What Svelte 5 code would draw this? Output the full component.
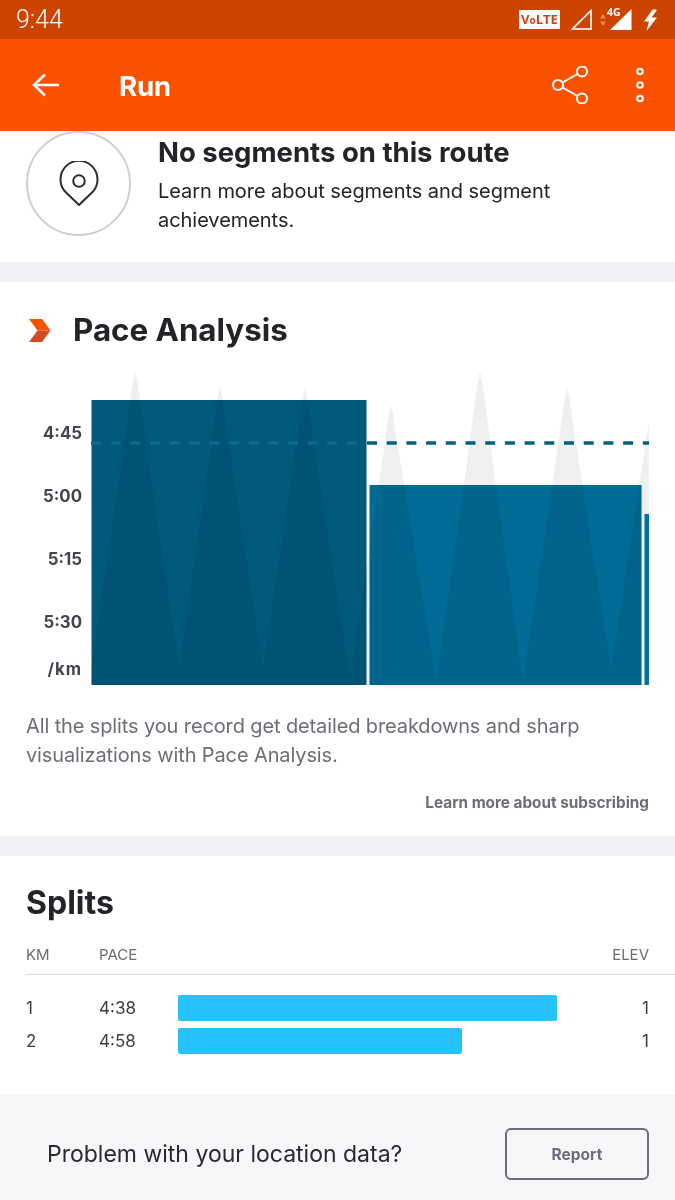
<script>
  const ticks = [
    { label: '4:45', y: 439 },
    { label: '5:00', y: 502 },
    { label: '5:15', y: 565 },
    { label: '5:30', y: 628 },
    { label: '/km', y: 675 }
  ];
  const peaks = [135, 220, 305, 391, 480, 567, 649];
  const tops = [371, 388, 387, 405, 371, 387, 424];
  const valleys = [92, 179, 263, 350, 436, 523, 611, 649];
  const valleyY = [668, 668, 668, 680, 680, 680, 668, 668];
  let mountain = 'M91 685 L91 ' + valleyY[0];
  peaks.forEach((p, i) => {
    const v0 = valleys[i];
    const v1 = valleys[i + 1];
    const t = tops[i];
    const b0 = valleyY[i];
    const b1 = valleyY[i + 1];
    mountain += ` L${p - (p - v0) * 0.36} ${t + (b0 - t) * 0.36} L${p - 5} ${t + 30} Q${p - 2} ${t + 8} ${p} ${t}`;
    if (p < 649) mountain += ` Q${p + 2} ${t + 8} ${p + 5} ${t + 30} L${p + (v1 - p) * 0.36} ${t + (b1 - t) * 0.36} L${v1} ${b1}`;
  });
  mountain += ' L649 685 Z';
  const splits = [
    { km: 1, pace: '4:38', width: 379, elev: 1 },
    { km: 2, pace: '4:58', width: 284, elev: 1 }
  ];
</script>

<div class="page">
  <header class="status">
    <span class="time">9:44</span>
    <div class="status-icons">
      <span class="volte">V<i>o</i>LTE</span>
      <svg width="21" height="21" viewBox="0 0 21 21"><path d="M20 1.500V20H1.500Z" fill="none" stroke="#fff" stroke-width="1.600"/></svg>
      <svg class="arrows" width="6" height="12" viewBox="0 0 6 12"><path d="M3 0l3 4.500H0ZM3 12L0 7.500h6Z" fill="#e8855a"/></svg>
      <div class="net">
        <span class="fourg">4G</span>
        <svg width="22" height="21" viewBox="0 0 22 21"><path d="M21.500 0V21H0Z" fill="#fff"/></svg>
      </div>
      <svg class="bolt" width="15" height="22" viewBox="0 0 15 22"><path d="M10 0L1 12.500h5L3.500 22 14 8.500H8.500L14 1Z" fill="#fff"/></svg>
    </div>
  </header>

  <nav class="toolbar">
    <svg class="back" width="28" height="24" viewBox="0 0 28 24"><path d="M27 12H2M13 1.500L2 12l11 10.500" fill="none" stroke="#fff" stroke-width="2.600"/></svg>
    <span class="run">Run</span>
    <svg class="share" width="38" height="38" viewBox="0 0 38 38" fill="none" stroke="#fff" stroke-width="2"><circle cx="6" cy="19" r="5"/><circle cx="30" cy="5.500" r="5"/><circle cx="30" cy="32.500" r="5"/><path d="M10.500 16.500L25.500 8M10.500 21.500l15 8.500"/></svg>
    <svg class="more" width="12" height="38" viewBox="0 0 12 38" fill="none" stroke="#fff" stroke-width="2"><circle cx="6" cy="5.500" r="2.800"/><circle cx="6" cy="19" r="2.800"/><circle cx="6" cy="32.500" r="2.800"/></svg>
  </nav>

  <section class="segments">
    <div class="circle">
      <svg width="40" height="46" viewBox="0 0 40 46" fill="none" stroke="#2d2d32" stroke-width="2"><path d="M20 44L6.500 31A18.500 18.500 0 1 1 33.500 31Z" stroke-linejoin="round"/><circle cx="20" cy="20" r="5.800"/></svg>
    </div>
    <div class="seg-text">
      <h2>No segments on this route</h2>
      <p>Learn more about segments and segment achievements.</p>
    </div>
  </section>

  <section class="pace">
    <div class="title-row">
      <svg width="22" height="23" viewBox="0 0 22 23"><path d="M0 0h13l8.500 11.500H8.500Z" fill="#fc5200"/><path d="M8.500 11.500h13L13 23H0Z" fill="#cf4a1d"/></svg>
      <h2>Pace Analysis</h2>
    </div>
    <svg class="chart" width="675" height="325" viewBox="0 365 675 325">
      <path d={mountain} fill="#efefef"/>
      <line x1="367" y1="443" x2="649" y2="443" class="dash"/>
      <rect x="91.500" y="400" width="275" height="285" fill="#00587a" class="bar"/>
      <rect x="369.500" y="485" width="272" height="200" fill="#006b96" class="bar"/>
      <rect x="644.500" y="514" width="4.500" height="171" fill="#0079a8" class="bar"/>
      <line x1="91" y1="443" x2="360" y2="443" class="dash inner"/>
      {#each ticks as t}
        <text x="82" y={t.y} class="tick">{t.label}</text>
      {/each}
    </svg>
    <p class="desc">All the splits you record get detailed breakdowns and sharp visualizations with Pace Analysis.</p>
    <a class="learn" href="#subscribe">Learn more about subscribing</a>
  </section>

  <section class="splits">
    <h2>Splits</h2>
    <div class="head">
      <span class="c-km">KM</span>
      <span class="c-pace">PACE</span>
      <span class="c-elev">ELEV</span>
    </div>
    <div class="rows">
      {#each splits as s}
        <div class="row">
          <span class="c-km">{s.km}</span>
          <span class="c-pace">{s.pace}</span>
          <div class="track"><div class="fill" style:width="{s.width}px"></div></div>
          <span class="c-elev">{s.elev}</span>
        </div>
      {/each}
    </div>
  </section>

  <footer class="report">
    <span>Problem with your location data?</span>
    <button type="button">Report</button>
  </footer>
</div>

<style>
  :global(body) { margin: 0; background: #fff; }
  .page {
    width: 675px;
    height: 1200px;
    overflow: hidden;
    font-family: Inter, "Noto Sans", sans-serif;
    color: #242428;
    background: #f0f0f5;
  }
  .status {
    height: 39px;
    background: #cc4400;
    display: flex;
    align-items: center;
    justify-content: space-between;
    padding: 0 17px 0 16px;
    color: #fff;
  }
  .time { font: 300 25px/39px Roboto, sans-serif; color: #fff; }
  .status-icons { display: flex; align-items: center; }
  .volte {
    width: 41px;
    height: 19px;
    margin-right: 11px;
    background: #fff;
    color: #c8451a;
    border-radius: 1px;
    font: 700 13px/19px "Open Sans", sans-serif;
    text-align: center;
  }
  .volte i { font-size: 10px; font-style: normal; }
  .arrows { margin: 0 4px 0 8px; }
  .net { position: relative; width: 22px; height: 21px; margin-right: 11px; }
  .net svg { display: block; }
  .fourg {
    position: absolute;
    left: -3px;
    top: -3px;
    font: 700 10.500px/12px "Open Sans", sans-serif;
    color: #fff;
  }
  .toolbar {
    height: 92px;
    background: #fc5200;
    display: flex;
    align-items: center;
    padding: 0 29px 0 32px;
    color: #fff;
  }
  .back { margin-left: 0; }
  .run { margin-left: 59px; padding-top: 2px; flex: 1; font-size: 27.700px; font-weight: 700; letter-spacing: -0.3px; }
  .more { margin-left: 44px; }
  .segments {
    height: 131px;
    background: #fff;
    display: flex;
    padding-left: 26px;
    box-sizing: border-box;
    margin-bottom: 20px;
  }
  .circle {
    width: 105px;
    height: 105px;
    box-sizing: border-box;
    border: 2px solid #cfcfcf;
    border-radius: 50%;
    display: flex;
    align-items: center;
    justify-content: center;
  }
  .seg-text { margin-left: 27px; }
  .seg-text h2 { margin: 3px 0 0; font-size: 27.500px; line-height: 36px; font-weight: 700; }
  .seg-text p { margin: 7px 0 0; font-size: 20px; letter-spacing: -0.05px; line-height: 29px; width: 470px; font-weight: 400; }
  .pace { height: 554px; background: #fff; margin-bottom: 20px; position: relative; }
  .title-row { height: 83px; box-sizing: border-box; display: flex; align-items: center; padding: 12px 0 0 29px; }
  .title-row svg { margin-top: 2px; }
  .title-row h2 { margin: 0 0 0 22px; font-size: 31.300px; font-weight: 700; line-height: 40px; }
  .chart { display: block; }
  .dash { stroke: #00607f; stroke-width: 3.400; stroke-dasharray: 10 9.700; }
  .dash.inner { stroke: #0c6a8b; }
  .bar { mix-blend-mode: multiply; }
  .tick { font: 700 16.800px Inter, sans-serif; fill: #44444c; text-anchor: end; }
  .tick:last-of-type { letter-spacing: 1px; }
  .desc { margin: 22px 26px 0; font-size: 20px; letter-spacing: -0.12px; line-height: 29px; color: #6d6d78; }
  .learn {
    display: block;
    margin: 22px 26px 0;
    text-align: right;
    font-size: 15.300px;
    line-height: 22px;
    font-weight: 700;
    color: #6d6d78;
    text-decoration: none;
  }
  .splits { height: 238px; background: #fff; box-sizing: border-box; padding: 27px 0 0 26px; }
  .splits h2 { margin: 0; font-size: 32px; line-height: 40px; font-weight: 700; }
  .head {
    display: flex;
    height: 42px;
    margin-top: 10px;
    box-sizing: border-box;
    padding-top: 12px;
    border-bottom: 1px solid #dcdce0;
    font-size: 15px;
    line-height: 20px;
    color: #6d6d78;
  }
  .c-km { width: 73px; }
  .c-pace { width: 79px; flex: none; }
  .c-elev { width: 40px; margin-left: auto; margin-right: 26px; text-align: right; white-space: nowrap; }
  .rows { margin-top: 20px; display: flex; flex-direction: column; gap: 7px; }
  .row { display: flex; align-items: center; height: 26px; font-size: 17px; color: #3c3c42; }
  .track { flex: 1; height: 26px; }
  .fill { height: 26px; background: #25c2ff; border-radius: 2px; }
  .report {
    height: 106px;
    box-sizing: border-box;
    padding: 14px 26px 0 47px;
    background: #f7f7fa;
    display: flex;
    align-items: center;
    justify-content: space-between;
    font-size: 23px;
    color: #2a2a2e;
  }
  .report button {
    width: 144px;
    height: 52px;
    border: 2px solid #6d6d78;
    border-radius: 6px;
    background: transparent;
    color: #6d6d78;
    font: 700 15.500px Inter, sans-serif;
  }
</style>
